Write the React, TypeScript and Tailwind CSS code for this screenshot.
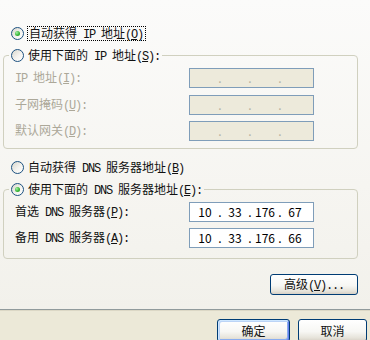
import React from "react";

function Radio({ checked }: { checked?: boolean }) {
  return (
    <span className="relative inline-block w-[13px] h-[13px] shrink-0 rounded-full border border-[#1c5180] bg-[linear-gradient(135deg,#d8d6cc_0%,#f4f3ef_55%,#ffffff_100%)]">
      {checked && (
        <span className="absolute left-[3px] top-[3px] w-[5px] h-[5px] rounded-full bg-[radial-gradient(circle_at_35%_35%,#a6f0a6_0%,#37b737_55%,#1f8a1f_100%)]" />
      )}
    </span>
  );
}

function M({ children }: { children: React.ReactNode }) {
  return (
    <span className="font-['Liberation_Mono',monospace] text-[12px] tracking-[-1.2px] whitespace-pre">{children}</span>
  );
}

function IpBox({ value, disabled }: { value?: string[]; disabled?: boolean }) {
  const parts = value ?? ["", "", "", ""];
  return (
    <div
      className={
        "flex items-center h-[20px] w-[125px] border border-[#7f9db9] pl-[3px] text-[12px] leading-[14px] " +
        (disabled ? "bg-[#edeadb] text-[#b5b2a3]" : "bg-white text-black")
      }
    >
      {parts.map((p, i) => (
        <React.Fragment key={i}>
          <span className="w-[24px] text-center">{p}</span>
          {i < 3 && <span className="w-[6px] text-center">.</span>}
        </React.Fragment>
      ))}
    </div>
  );
}

export default function App() {
  const grey = "text-[#aca899]";
  return (
    <div
      className="w-[370px] h-[340px] overflow-hidden bg-[#ece9d8] text-[12px] leading-[14px] text-[#111]"
      style={{ fontFamily: '"Noto Sans CJK SC", "Noto Sans", sans-serif' }}
    >
      <div className="flex flex-col h-[310px] border-b border-[#919b9c] bg-[linear-gradient(180deg,#fbfbfa_0%,#f6f5f1_60%,#f2f1eb_100%)]">
        <div className="h-[26px]" />
        {/* Radio 1 */}
        <div className="flex items-center h-[15px] pl-[11px] gap-[3px]">
          <Radio checked />
          <span className="border border-dotted border-black pl-[1px] pr-[2px] h-[15px] flex items-center">
            <span>
              自动获得<M> IP </M>地址<M>(<u>O</u>)</M>
            </span>
          </span>
        </div>

        {/* Group 1 */}
        <fieldset className="mt-[7px] ml-[3px] w-[355px] border border-[#d0d0bf] rounded-[4px] pt-[5px] pb-[7px]">
          <legend className="ml-[5px] px-[2px]">
            <span className="flex items-center h-[15px] gap-[4px]">
              <Radio />
              <span>
                使用下面的<M> IP </M>地址<M>(<u>S</u>):</M>
              </span>
            </span>
          </legend>
          <div className="grid grid-cols-[174px_125px] gap-y-[6.5px] items-center pl-[11px]">
            <span className={grey}>
              <M>IP </M>地址<M>(<u>I</u>):</M>
            </span>
            <IpBox disabled />
            <span className={grey}>
              子网掩码<M>(<u>U</u>):</M>
            </span>
            <IpBox disabled />
            <span className={grey}>
              默认网关<M>(<u>D</u>):</M>
            </span>
            <IpBox disabled />
          </div>
        </fieldset>

        {/* Radio 3 */}
        <div className="flex items-center h-[15px] pl-[11px] gap-[4px] mt-[11px]">
          <Radio />
          <span>
            自动获得<M> DNS </M>服务器地址<M>(<u>B</u>)</M>
          </span>
        </div>

        {/* Group 2 */}
        <fieldset className="mt-[7px] ml-[3px] w-[355px] border border-[#d0d0bf] rounded-[4px] pt-[5px] pb-[10px]">
          <legend className="ml-[5px] px-[2px]">
            <span className="flex items-center h-[15px] gap-[4px]">
              <Radio checked />
              <span>
                使用下面的<M> DNS </M>服务器地址<M>(<u>E</u>):</M>
              </span>
            </span>
          </legend>
          <div className="grid grid-cols-[174px_125px] gap-y-[6px] items-center pl-[11px]">
            <span>
              首选<M> DNS </M>服务器<M>(<u>P</u>):</M>
            </span>
            <IpBox value={["10", "33", "176", "67"]} />
            <span>
              备用<M> DNS </M>服务器<M>(<u>A</u>):</M>
            </span>
            <IpBox value={["10", "33", "176", "66"]} />
          </div>
        </fieldset>

        <div className="flex justify-end pr-[12px] mt-[15px]">
          <button className="w-[88px] h-[21px] rounded-[3px] border border-[#003c74] bg-[linear-gradient(180deg,#ffffff_0%,#f7f7f4_55%,#e6e3da_85%,#d6d0c5_100%)] text-[12px] leading-[14px] text-[#111]">
            高级<M>(<u>V</u>)...</M>
          </button>
        </div>
      </div>
      <div className="h-[1px] bg-[#dcd8c6]" />

      <div className="flex justify-end gap-[8px] pr-[3px] pt-[8px]">
        <button className="w-[73px] h-[23px] rounded-[3px] border border-[#003c74] bg-[linear-gradient(180deg,#ffffff_0%,#f7f7f4_55%,#e6e3da_85%,#d6d0c5_100%)] shadow-[inset_1px_1px_0_#cee7ff,inset_-1px_-1px_0_#6982ee,inset_2px_2px_0_#bcd4f6,inset_-2px_-2px_0_#89adf0] text-[12px] leading-[14px] text-[#111]">
          确定
        </button>
        <button className="w-[69px] h-[23px] rounded-[3px] border border-[#003c74] bg-[linear-gradient(180deg,#ffffff_0%,#f7f7f4_55%,#e6e3da_85%,#d6d0c5_100%)] text-[12px] leading-[14px] text-[#111]">
          取消
        </button>
      </div>
    </div>
  );
}
